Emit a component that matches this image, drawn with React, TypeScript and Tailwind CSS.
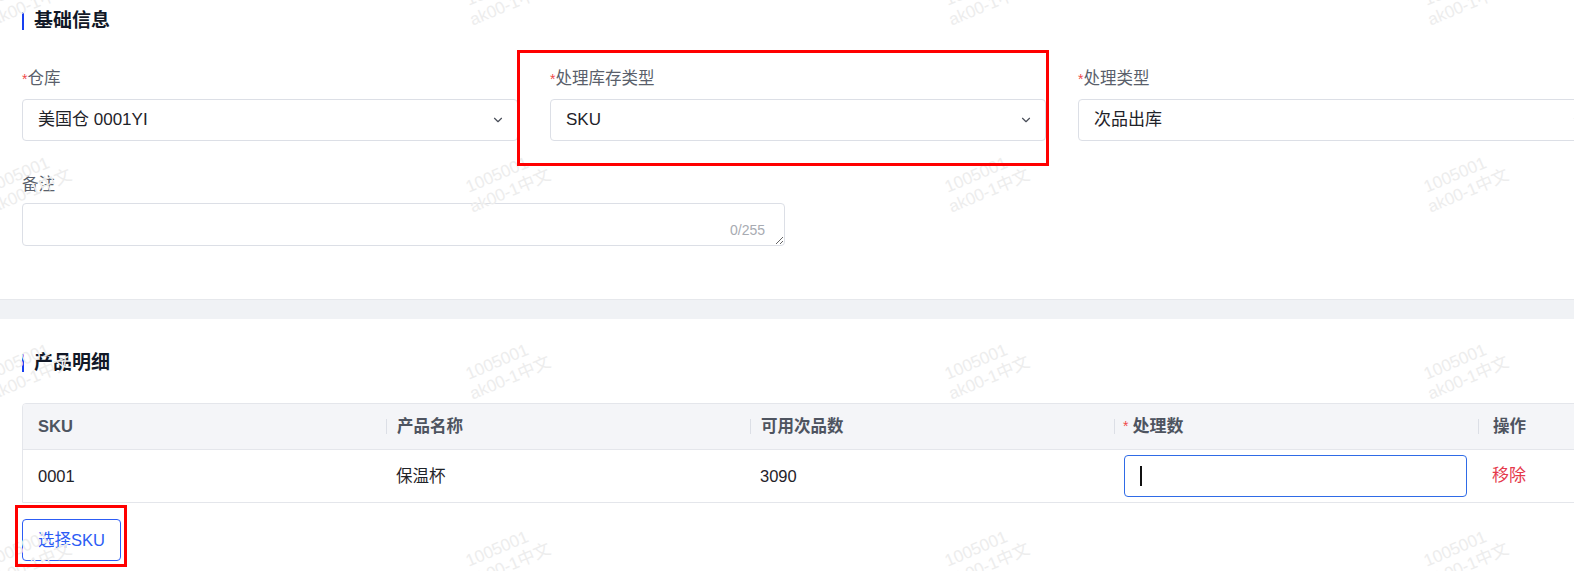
import { ChevronDown } from "lucide-react";

const watermarks: { left: number; top: number }[] = [];
for (let row = 0; row < 4; row++) {
  for (let col = 0; col < 4; col++) {
    watermarks.push({ left: -12 + col * 479, top: -8 + row * 187 });
  }
}

function SectionTitle({ title }: { title: string }) {
  return (
    <div className="flex h-[20px] items-center">
      <span className="h-[18px] w-[2px] bg-[#1840f0]" />
      <span className="ml-[10px] text-[19px] font-bold leading-[20px] text-[#111827]">
        {title}
      </span>
    </div>
  );
}

function FieldLabel({ label, required }: { label: string; required?: boolean }) {
  return (
    <div className="mb-[11px] h-[20px] text-[16.5px] leading-[20px] text-[#5a5f6b]">
      {required && <span className="text-[14px] text-[#f04a4a]">*</span>}
      {label}
    </div>
  );
}

function SelectBox({ value }: { value: string }) {
  return (
    <div className="flex h-[42px] items-center justify-between rounded-[4px] border border-[#dcdfe6] bg-white pl-[15px] pr-[12px] text-[17px] text-[#1f2329]">
      <span>{value}</span>
      <ChevronDown size={14} strokeWidth={2} className="text-[#4a4f5a]" />
    </div>
  );
}

export default function App() {
  return (
    <div className="relative h-[571px] w-[1574px] overflow-hidden bg-white font-['Liberation_Sans','Noto_Sans_CJK_SC',sans-serif]">
      {/* 基础信息 */}
      <div className="w-[1600px] pb-[53px] pl-[22px] pt-[11px]">
        <SectionTitle title="基础信息" />
        <div className="mt-[37px] grid grid-cols-[496px_496px_520px] gap-x-[32px]">
          <div>
            <FieldLabel label="仓库" required />
            <SelectBox value="美国仓 0001YI" />
          </div>
          <div>
            <FieldLabel label="处理库存类型" required />
            <SelectBox value="SKU" />
          </div>
          <div>
            <FieldLabel label="处理类型" required />
            <SelectBox value="次品出库" />
          </div>
        </div>
        <div className="mt-[33px]">
          <div className="mb-[9px] h-[20px] text-[16.5px] leading-[20px] text-[#5a5f6b]">备注</div>
          <div className="relative w-[763px]">
            <textarea
              rows={1}
              className="block h-[43px] w-full rounded-[4px] border border-[#dcdfe6] px-[15px] py-[8px] text-[14px] outline-none"
            />
            <span className="absolute bottom-[8px] right-[20px] text-[14px] leading-[16px] text-[#a8abb2]">
              0/255
            </span>
          </div>
        </div>
      </div>

      <div className="h-[20px] border-t border-[#e6e8ec] bg-[#f0f2f5]" />

      {/* 产品明细 */}
      <div className="w-[1600px] pl-[22px] pt-[34px]">
        <SectionTitle title="产品明细" />
        <div className="mt-[30px] overflow-hidden rounded-t-[4px] border border-[#e4e6eb]">
          <div className="grid h-[46px] grid-cols-[363px_364px_364px_364px_1fr] items-center border-b border-[#e4e6eb] bg-[#f4f5f8] text-[16.5px] font-bold text-[#4e5460]">
            <div className="pl-[15px]">SKU</div>
            <div className="flex items-center">
              <span className="h-[15px] w-px bg-[#dcdfe6]" />
              <span className="ml-[10px]">产品名称</span>
            </div>
            <div className="flex items-center">
              <span className="h-[15px] w-px bg-[#dcdfe6]" />
              <span className="ml-[10px]">可用次品数</span>
            </div>
            <div className="flex items-center">
              <span className="h-[15px] w-px bg-[#dcdfe6]" />
              <span className="ml-[8px] text-[14px] font-normal text-[#f04a4a]">*</span>
              <span className="ml-[4px] text-[17px]">处理数</span>
            </div>
            <div className="flex items-center">
              <span className="h-[15px] w-px bg-[#dcdfe6]" />
              <span className="ml-[14px]">操作</span>
            </div>
          </div>
          <div className="grid h-[52px] grid-cols-[363px_364px_364px_364px_1fr] items-center text-[16.5px] text-[#1f2329]">
            <div className="pl-[15px]">0001</div>
            <div className="pl-[10px]">保温杯</div>
            <div className="pl-[10px]">3090</div>
            <div className="pl-[10px] pr-[11px]">
              <div className="flex h-[42px] items-center rounded-[4px] border border-[#2f6be6] pl-[15px]">
                <span className="h-[20px] w-[2px] bg-[#111]" />
              </div>
            </div>
            <div className="pl-[14px] text-[17px] text-[#e5394b]">移除</div>
          </div>
        </div>
        <button className="mt-[16px] h-[42px] w-[99px] rounded-[4px] border border-[#2c5cf5] bg-white text-[16.5px] text-[#2c5cf5]">
          选择SKU
        </button>
      </div>

      {/* 水印 */}
      <div className="pointer-events-none absolute inset-0">
        {watermarks.map((w, i) => (
          <div
            key={i}
            className="absolute origin-left -rotate-[23deg] text-[17px] leading-[20px] text-[#ededed]"
            style={{ left: w.left, top: w.top }}
          >
            <div className="pl-[4px]">1005001</div>
            <div>ak00-1中文</div>
          </div>
        ))}
      </div>

      {/* 标注框 */}
      <div className="pointer-events-none absolute left-[517px] top-[50px] h-[116px] w-[532px] border-[3px] border-[#ff0000]" />
      <div className="pointer-events-none absolute left-[15px] top-[505px] h-[62px] w-[112px] border-[3px] border-[#ff0000]" />
    </div>
  );
}
